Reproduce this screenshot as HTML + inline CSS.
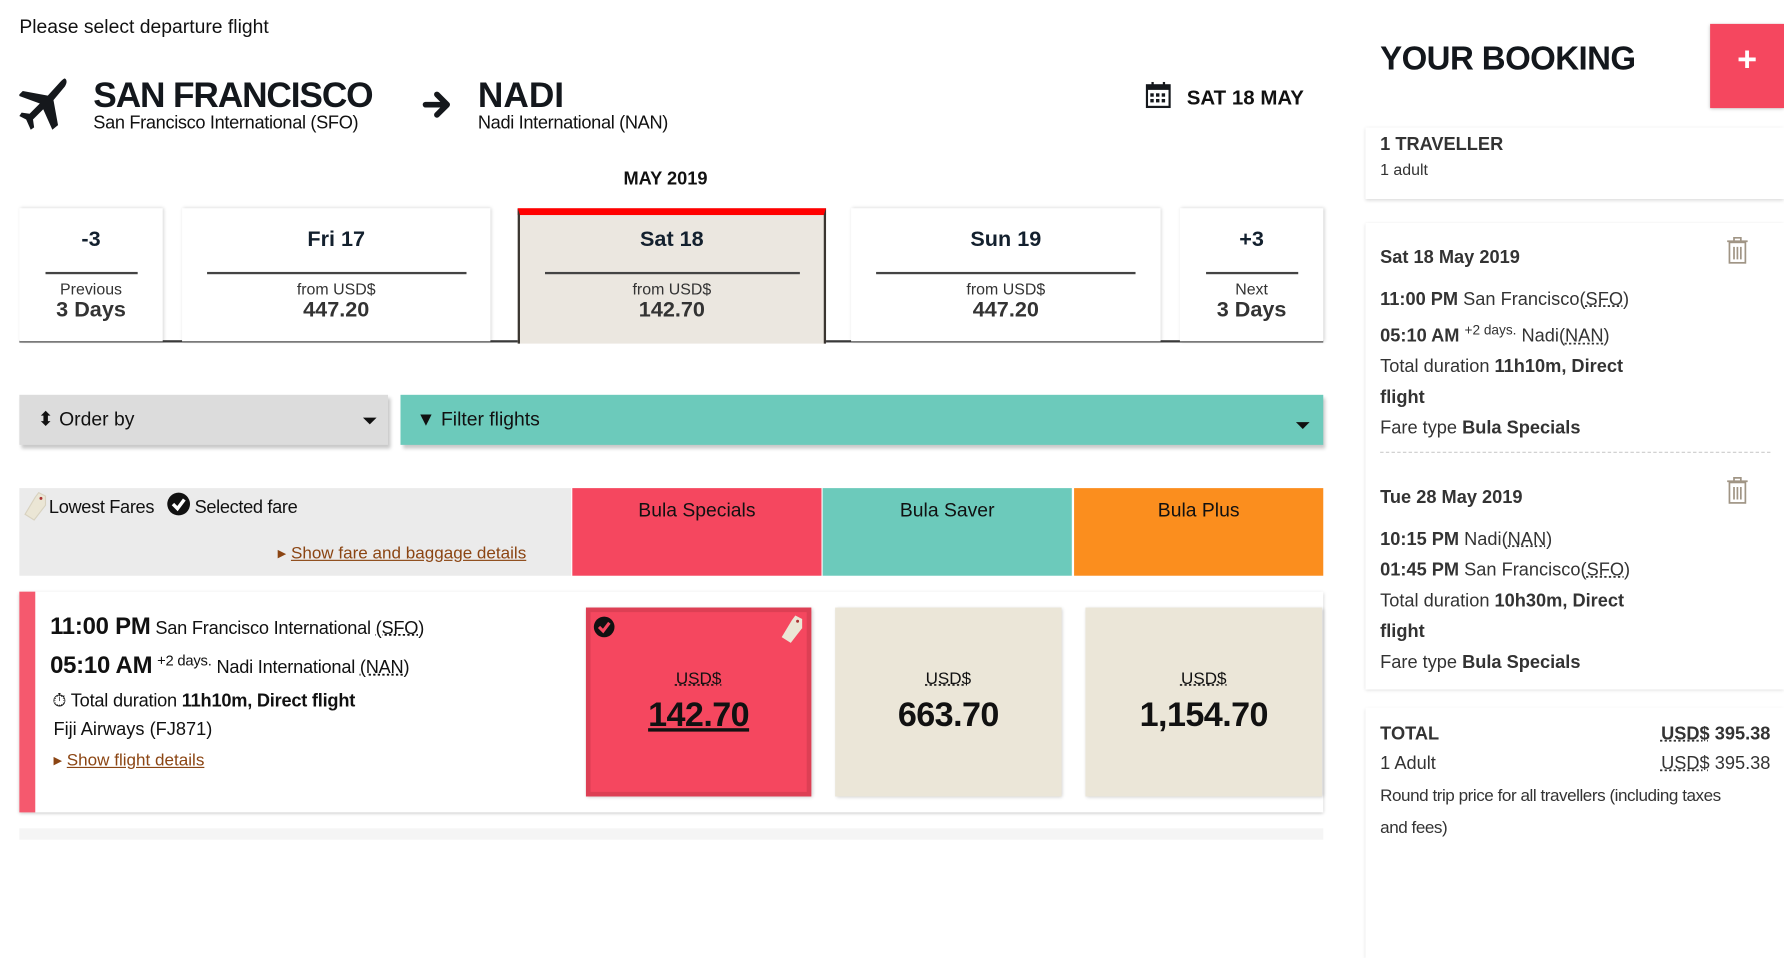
<!DOCTYPE html>
<html><head><meta charset="utf-8"><style>
*{box-sizing:border-box;margin:0;padding:0}
html,body{width:1784px;height:833px;overflow:hidden;background:#fff}
#w{position:absolute;left:0;top:0;width:1568px;height:732px;transform:scale(1.1378);transform-origin:0 0;font-family:"Liberation Sans",sans-serif;color:#111}
.a{position:absolute;white-space:nowrap}
.b{font-weight:bold}
.tab{position:absolute;top:183px;height:117px;background:#fff;box-shadow:1px 0 3px rgba(0,0,0,.18);text-align:center;color:#13202e}
.tab .d{position:absolute;left:0;right:0;top:17px;font-size:19px;font-weight:bold}
.tab .ln{position:absolute;top:56px;height:2px;background:#444}
.tab .f{position:absolute;left:0;right:0;top:63px;font-size:14px;color:#333;line-height:16px}
.tab .p{position:absolute;left:0;right:0;top:79px;font-size:19px;font-weight:bold;color:#333;line-height:22px}
.fare{position:absolute;top:534px;height:166px;text-align:center;box-shadow:1px 1px 3px rgba(0,0,0,.2)}
.fare .u{position:absolute;left:0;right:0;top:54px;font-size:15px;text-decoration:underline dotted}
.fare .v{position:absolute;left:0;right:0;top:78px;font-size:30px;font-weight:bold;letter-spacing:-0.5px}
.dot{text-decoration:underline dotted}
.rp{font-size:16px;color:#333;line-height:27px}
</style></head><body><div id="w">
<div class="a" style="left:17px;top:14px;font-size:17px">Please select departure flight</div>
<svg class="a" style="left:17px;top:68px" width="44" height="46" viewBox="0 0 44 46"><path d="M40 1c2 1 2 4 0 7L30 20l4 22-5 4-8-18-9 9 1 7-3 2-4-9-6-3 2-3 7 1 9-9L-1 16l4-4 22 4L36 4c2-2 3-3 4-3z" fill="#15181c"/></svg>
<div class="a b" style="left:82px;top:66px;font-size:31px;color:#13171c;letter-spacing:-1px">SAN FRANCISCO</div>
<div class="a" style="left:82px;top:100px;font-size:16px;letter-spacing:-0.3px">San Francisco International (SFO)</div>
<svg class="a" style="left:371px;top:78px" width="26" height="28" viewBox="0 0 26 28"><path d="M3 14h18M13 5l9 9-9 9" stroke="#15181c" stroke-width="5" fill="none" stroke-linecap="round" stroke-linejoin="round"/></svg>
<div class="a b" style="left:420px;top:66px;font-size:31px;color:#13171c">NADI</div>
<div class="a" style="left:420px;top:100px;font-size:16px;letter-spacing:-0.3px">Nadi International (NAN)</div>
<svg class="a" style="left:1007px;top:72px" width="22" height="23" viewBox="0 0 22 23"><rect x="1" y="3" width="20" height="19" fill="none" stroke="#15181c" stroke-width="2"/><rect x="1" y="3" width="20" height="4" fill="#15181c"/><rect x="5" y="0" width="2" height="5" fill="#15181c"/><rect x="15" y="0" width="2" height="5" fill="#15181c"/><g fill="#15181c"><rect x="4" y="10" width="3" height="3"/><rect x="9" y="10" width="3" height="3"/><rect x="14" y="10" width="3" height="3"/><rect x="4" y="15" width="3" height="3"/><rect x="9" y="15" width="3" height="3"/><rect x="14" y="15" width="3" height="3"/></g></svg>
<div class="a b" style="left:1043px;top:76px;font-size:18px">SAT 18 MAY</div>
<div class="a b" style="left:548px;top:149px;font-size:16px">MAY 2019</div>

<div class="a" style="left:17px;top:299px;width:1146px;height:2px;background:#3a3a3a"></div>
<div class="tab" style="left:17px;width:126px"><div class="d">-3</div><div class="ln" style="left:23px;width:81px"></div><div class="f">Previous</div><div class="p">3 Days</div></div>
<div class="tab" style="left:160px;width:271px"><div class="d">Fri 17</div><div class="ln" style="left:22px;width:228px"></div><div class="f">from USD$</div><div class="p">447.20</div></div>
<div class="tab" style="left:455px;width:271px;height:119px;background:#ebe7e0;border:2px solid #3a3530;border-top:6px solid #f00;border-bottom:none;box-shadow:none"><div class="d" style="top:11px">Sat 18</div><div class="ln" style="left:22px;width:224px;top:50px"></div><div class="f" style="top:57px">from USD$</div><div class="p" style="top:73px">142.70</div></div>
<div class="tab" style="left:748px;width:272px"><div class="d">Sun 19</div><div class="ln" style="left:22px;width:228px"></div><div class="f">from USD$</div><div class="p">447.20</div></div>
<div class="tab" style="left:1037px;width:126px"><div class="d">+3</div><div class="ln" style="left:23px;width:81px"></div><div class="f">Next</div><div class="p">3 Days</div></div>

<div class="a" style="left:17px;top:347px;width:324px;height:44px;background:#dcdcdc;box-shadow:2px 3px 3px rgba(0,0,0,.22)"></div>
<div class="a" style="left:33px;top:359px;font-size:17px">⬍ Order by</div>
<div class="a" style="left:319px;top:367px;border:6px solid transparent;border-top:6px solid #111;border-bottom:none"></div>
<div class="a" style="left:352px;top:347px;width:811px;height:44px;background:#6ccabb;box-shadow:2px 3px 3px rgba(0,0,0,.22)"></div>
<div class="a" style="left:366px;top:359px;font-size:17px">▼ Filter flights</div>
<div class="a" style="left:1139px;top:371px;border:6px solid transparent;border-top:6px solid #111;border-bottom:none"></div>

<div class="a" style="left:17px;top:429px;width:485px;height:77px;background:#ebebeb"></div>
<svg class="a" style="left:20px;top:432px" width="22" height="26" viewBox="0 0 22 26"><path d="M14 1l6 3 0 8-10 13-8-5 9-15z" fill="#ebe6d5" stroke="#d8d2c0"/><circle cx="16" cy="6" r="1.3" fill="#a33"/></svg>
<div class="a" style="left:43px;top:438px;font-size:16px;letter-spacing:-0.3px">Lowest Fares</div>
<svg class="a" style="left:146px;top:432px" width="22" height="22" viewBox="0 0 22 22"><circle cx="11" cy="11" r="10" fill="#111"/><path d="M6 11l4 4 6-8" stroke="#fff" stroke-width="3" fill="none"/></svg>
<div class="a" style="left:171px;top:438px;font-size:16px;letter-spacing:-0.3px">Selected fare</div>
<div class="a" style="left:244px;top:477px;font-size:15px;color:#8b4513">▸ <span style="text-decoration:underline">Show fare and baggage details</span></div>
<div class="a" style="left:503px;top:429px;width:219px;height:77px;background:#f5475f"></div>
<div class="a" style="left:723px;top:429px;width:219px;height:77px;background:#6ccabb"></div>
<div class="a" style="left:944px;top:429px;width:219px;height:77px;background:#fb8e1e"></div>
<div class="a" style="left:503px;top:439px;width:219px;text-align:center;font-size:17px">Bula Specials</div>
<div class="a" style="left:723px;top:439px;width:219px;text-align:center;font-size:17px">Bula Saver</div>
<div class="a" style="left:944px;top:439px;width:219px;text-align:center;font-size:17px">Bula Plus</div>

<div class="a" style="left:17px;top:520px;width:1146px;height:194px;background:#fff;box-shadow:0 1px 3px rgba(0,0,0,.25)"></div>
<div class="a" style="left:17px;top:520px;width:14px;height:194px;background:#f5596e"></div>
<div class="a" style="left:17px;top:728px;width:1146px;height:10px;background:#f5f5f5"></div>
<div class="a" style="left:44px;top:539px;font-size:16px;letter-spacing:-0.2px"><b style="font-size:21px">11:00 PM</b> San Francisco International <span class="dot">(SFO)</span></div>
<div class="a" style="left:44px;top:573px;font-size:16px;letter-spacing:-0.2px"><b style="font-size:21px">05:10 AM</b> <sup style="font-size:13px">+2 days.</sup> Nadi International <span class="dot">(NAN)</span></div>
<div class="a" style="left:46px;top:608px;font-size:16px;letter-spacing:-0.2px">⏱ Total duration <b>11h10m, Direct flight</b></div>
<div class="a" style="left:47px;top:633px;font-size:16px">Fiji Airways (FJ871)</div>
<div class="a" style="left:47px;top:659px;font-size:15px;color:#8b4513">▸ <span style="text-decoration:underline">Show flight details</span></div>

<div class="fare" style="left:515px;width:198px;background:#f5475f;border:4px solid #dd3f54"><div class="u" style="top:50px">USD$</div><div class="v" style="top:74px;text-decoration:underline">142.70</div>
<svg style="position:absolute;left:2px;top:3px" width="20" height="20" viewBox="0 0 22 22"><circle cx="11" cy="11" r="10" fill="#111"/><path d="M6 11l4 4 6-8" stroke="#f5475f" stroke-width="3" fill="none"/></svg>
<svg style="position:absolute;right:2px;top:2px" width="22" height="26" viewBox="0 0 22 26"><path d="M14 1l6 3 0 8-10 13-8-5 9-15z" fill="#ebe6d5"/><circle cx="16" cy="6" r="1.3" fill="#a33"/></svg></div>
<div class="fare" style="left:734px;width:199px;background:#ebe6d8"><div class="u">USD$</div><div class="v">663.70</div></div>
<div class="fare" style="left:954px;width:208px;background:#ebe6d8"><div class="u">USD$</div><div class="v">1,154.70</div></div>

<div class="a b" style="left:1213px;top:36px;font-size:29px;color:#13171c;letter-spacing:-0.5px">YOUR BOOKING</div>
<div class="a" style="left:1503px;top:21px;width:65px;height:74px;background:#f5475f;box-shadow:0 1px 3px rgba(0,0,0,.25)"></div>
<div class="a b" style="left:1503px;top:36px;width:65px;text-align:center;color:#fff;font-size:30px">+</div>
<div class="a" style="left:1200px;top:112px;width:368px;height:63px;box-shadow:0 1px 3px rgba(0,0,0,.15)"></div>
<div class="a b" style="left:1213px;top:119px;font-size:16px;color:#333">1 TRAVELLER</div>
<div class="a" style="left:1213px;top:141px;font-size:14px;color:#333">1 adult</div>
<div class="a" style="left:1200px;top:196px;width:368px;height:410px;box-shadow:0 1px 3px rgba(0,0,0,.15)"></div>
<div class="a rp" style="left:1213px;top:213px"><b>Sat 18 May 2019</b></div>
<div class="a rp" style="left:1213px;top:250px"><b>11:00 PM</b> San Francisco(<span class="dot">SFO</span>)<br><b>05:10 AM</b> <sup style="font-size:12px">+2 days.</sup> Nadi(<span class="dot">NAN</span>)<br>Total duration <b>11h10m, Direct</b><br><b>flight</b><br>Fare type <b>Bula Specials</b></div>
<div class="a" style="left:1213px;top:397px;width:343px;border-top:1px dashed #ccc"></div>
<div class="a rp" style="left:1213px;top:424px"><b>Tue 28 May 2019</b></div>
<div class="a rp" style="left:1213px;top:461px"><b>10:15 PM</b> Nadi(<span class="dot">NAN</span>)<br><b>01:45 PM</b> San Francisco(<span class="dot">SFO</span>)<br>Total duration <b>10h30m, Direct</b><br><b>flight</b><br>Fare type <b>Bula Specials</b></div>
<svg class="a" style="left:1517px;top:207px" width="20" height="26" viewBox="0 0 20 26"><g fill="none" stroke="#a09585" stroke-width="1.5"><rect x="3" y="6" width="14" height="18"/><path d="M1 5h18M7 5V2h6v3M7 10v11M10 10v11M13 10v11"/></g></svg>
<svg class="a" style="left:1517px;top:418px" width="20" height="26" viewBox="0 0 20 26"><g fill="none" stroke="#a09585" stroke-width="1.5"><rect x="3" y="6" width="14" height="18"/><path d="M1 5h18M7 5V2h6v3M7 10v11M10 10v11M13 10v11"/></g></svg>
<div class="a" style="left:1200px;top:622px;width:368px;height:220px;box-shadow:0 1px 3px rgba(0,0,0,.15)"></div>
<div class="a b" style="left:1213px;top:637px;font-size:16px;color:#333">TOTAL</div>
<div class="a b" style="left:1400px;width:156px;text-align:right;top:637px;font-size:16px;color:#333"><span class="dot">USD$</span> 395.38</div>
<div class="a" style="left:1213px;top:663px;font-size:16px;color:#333">1 Adult</div>
<div class="a" style="left:1400px;width:156px;text-align:right;top:663px;font-size:16px;color:#333"><span class="dot">USD$</span> 395.38</div>
<div class="a" style="left:1213px;top:686px;font-size:15px;color:#333;line-height:28px;letter-spacing:-0.4px">Round trip price for all travellers (including taxes<br>and fees)</div>
</div></body></html>
